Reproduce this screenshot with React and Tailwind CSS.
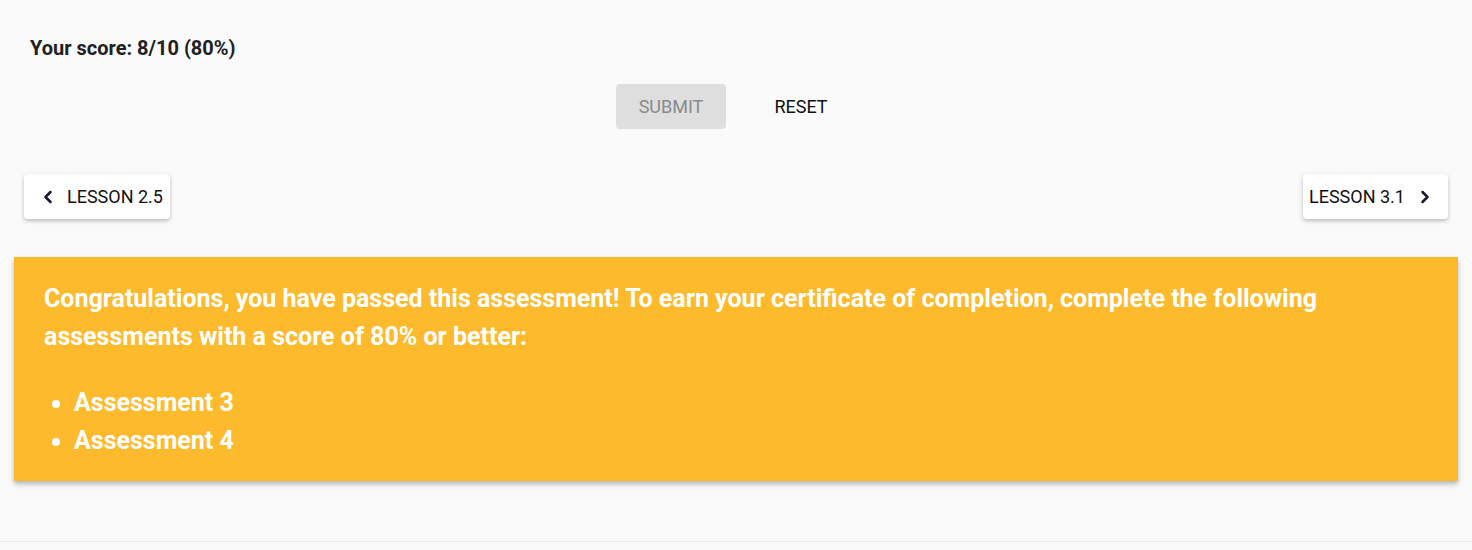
import { ChevronLeft, ChevronRight } from "lucide-react";

const App = () => {
  return (
    <div className="min-h-[550px] bg-[#fafafa] font-['Roboto',sans-serif] text-[#212121]">
      <div className="px-[14px] pt-[37px] pb-[60px] border-b border-[#ececec]">
        {/* score */}
        <p className="px-4 text-[20px] font-bold leading-[22px] text-[#212121]">
          Your score: 8/10 (80%)
        </p>

        {/* actions */}
        <div className="flex justify-center gap-5 mt-[25px]">
          <button
            disabled
            className="w-[110px] h-[45px] rounded bg-[#dedede] text-[18px] text-[#8a8a8a] uppercase"
          >
            Submit
          </button>
          <button className="w-[110px] h-[45px] rounded text-[18px] text-[#111] uppercase">
            Reset
          </button>
        </div>

        {/* lesson nav */}
        <div className="flex justify-between items-center mt-[45px] px-[10px]">
          <button className="flex items-center h-[45px] w-[146px] pl-[14px] rounded bg-white shadow-[0_2px_4px_rgba(0,0,0,0.25)] text-[18px] text-[#111]">
            <ChevronLeft size={20} strokeWidth={3} className="text-[#1a1a2e]" />
            <span className="ml-[9px]">LESSON 2.5</span>
          </button>
          <button className="flex items-center h-[45px] w-[145px] pl-[6px] rounded bg-white shadow-[0_2px_4px_rgba(0,0,0,0.25)] text-[18px] text-[#111]">
            <span>LESSON 3.1</span>
            <ChevronRight size={20} strokeWidth={3} className="ml-[10px] text-[#1a1a2e]" />
          </button>
        </div>

        {/* result */}
        <div className="mt-[38px] bg-[#fdba2d] px-[30px] pt-[23px] pb-[21px] text-white shadow-[0_3px_5px_rgba(0,0,0,0.28)]">
          <p className="text-[25px] font-bold leading-[38px]">
            Congratulations, you have passed this assessment! To earn your certificate of completion, complete the following assessments with a score of 80% or better:
          </p>
          <ul className="mt-[28px] list-disc pl-[30px] text-[25px] font-bold leading-[38px]">
            <li>Assessment 3</li>
            <li>Assessment 4</li>
          </ul>
        </div>
      </div>
    </div>
  );
};

export default App;
